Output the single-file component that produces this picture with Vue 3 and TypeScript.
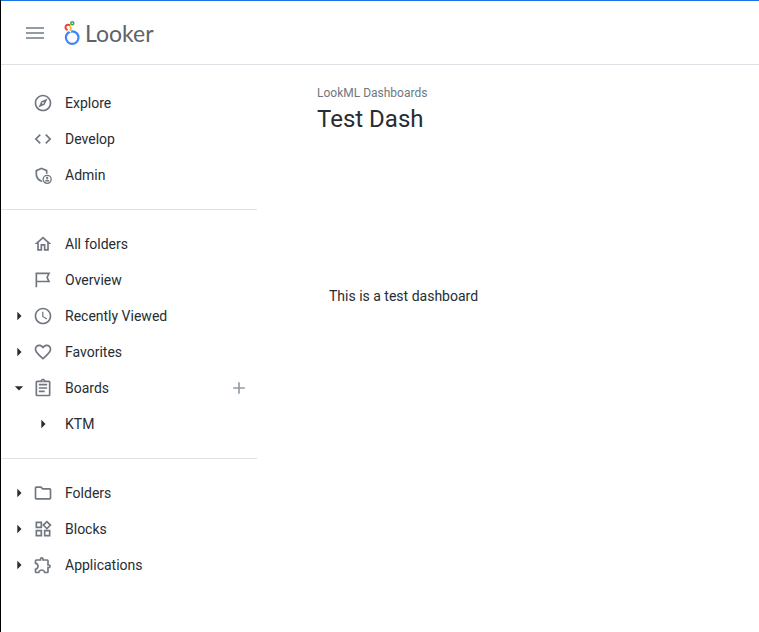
<script setup lang="ts">
import { ref } from 'vue'

interface NavItem {
  label: string
  icon?: string
  caret?: boolean
  open?: boolean
  addable?: boolean
  children?: NavItem[]
}

const icons: Record<string, string> = {
  explore:
    'M12 2C6.48 2 2 6.48 2 12s4.48 10 10 10 10-4.48 10-10S17.52 2 12 2zm0 18c-4.41 0-8-3.59-8-8s3.59-8 8-8 8 3.59 8 8-3.59 8-8 8zm-5.5-2.5l7.51-3.49L17.5 6.5 9.99 9.99 6.5 17.5zm5.5-6.6c.61 0 1.1.49 1.1 1.1s-.49 1.1-1.1 1.1-1.1-.49-1.1-1.1.49-1.1 1.1-1.1z',
  develop:
    'M9.4 16.6L4.8 12l4.6-4.6L8 6l-6 6 6 6 1.4-1.4zm5.2 0l4.6-4.6-4.6-4.6L16 6l6 6-6 6-1.4-1.4z',
  admin:
    'M10.2 3L3 6v5.200c0 4.700 3.100 8.100 7.400 9.300l1-.4a7 7 0 0 1-1-1.800C7.200 17.200 5 14.600 5 11.200V7.400l5.200-2.200 5.200 2.200v3.200a7 7 0 0 1 2 0V6zM17 11.600a5.600 5.600 0 1 0 0 11.200 5.600 5.600 0 0 0 0-11.200zm0 1.600a4 4 0 1 1 0 8 4 4 0 0 1 0-8zm0 1a1.400 1.400 0 1 0 0 2.800 1.400 1.400 0 0 0 0-2.800zm0 3.400c-1.300 0-2.600.5-2.600 1.400v.7h5.200v-.7c0-.9-1.300-1.400-2.600-1.400z',
  home:
    'M12 5.69l5 4.5V18h-2v-6H9v6H7v-7.81l5-4.5M12 3L2 12h3v8h6v-6h2v6h6v-8h3L12 3z',
  flag:
    'M3 3h17.800l-2.800 5.900 2.800 5.900H5v5.900H3V3zm2 2v7.800h12.700L15.800 8.900 17.700 5H5z',
  clock:
    'M12 2C6.500 2 2 6.500 2 12s4.500 10 10 10 10-4.480 10-10S17.520 2 12 2zm0 18c-4.420 0-8-3.580-8-8s3.580-8 8-8 8 3.580 8 8-3.580 8-8 8zm.5-13H11v6l5.250 3.150.75-1.230-4.500-2.670z',
  heart:
    'M16.500 3c-1.740 0-3.410.81-4.500 2.090C10.910 3.810 9.240 3 7.500 3 4.420 3 2 5.420 2 8.500c0 3.780 3.400 6.860 8.550 11.540L12 21.350l1.450-1.320C18.600 15.360 22 12.280 22 8.500 22 5.420 19.580 3 16.500 3zm-4.400 15.550l-.1.1-.1-.1C7.140 14.240 4 11.390 4 8.500 4 6.500 5.500 5 7.500 5c1.540 0 3.040.99 3.570 2.360h1.870C13.460 5.990 14.960 5 16.500 5c2 0 3.500 1.500 3.500 3.500 0 2.890-3.140 5.740-7.900 10.050z',
  board:
    'M7 15h7v2H7zm0-4h10v2H7zm0-4h10v2H7zm12-4h-4.180C14.400 1.840 13.300 1 12 1s-2.400.84-2.820 2H5c-1.100 0-2 .9-2 2v15c0 1.100.9 2 2 2h14c1.100 0 2-.9 2-2V5c0-1.100-.9-2-2-2zm-7-.25c.41 0 .75.34.75.75s-.34.75-.75.75-.75-.34-.75-.75.34-.75.75-.75zM19 20H5V5h14v15z',
  folder:
    'M9.170 6l2 2H20v10H4V6h5.170M10 4H4c-1.100 0-1.990.9-1.990 2L2 18c0 1.100.9 2 2 2h16c1.100 0 2-.9 2-2V8c0-1.100-.9-2-2-2h-8l-2-2z',
  blocks:
    'M16.660 4.520l2.830 2.830-2.830 2.830-2.830-2.830 2.830-2.830M9 5v4H5V5h4m10 10v4h-4v-4h4M9 15v4H5v-4h4m7.660-13.310L11 7.340 16.660 13l5.660-5.660-5.660-5.650zM11 3H3v8h8V3zm10 10h-8v8h8v-8zm-10 0H3v8h8v-8z',
  puzzle:
    'M10.500 4.500c.28 0 .5.22.5.5v2h6v6h2c.28 0 .5.22.5.5s-.22.5-.5.5h-2v6h-2.120c-.68-1.750-2.390-3-4.380-3s-3.700 1.250-4.380 3H4v-2.120c1.750-.68 3-2.390 3-4.380 0-1.990-1.240-3.700-2.990-4.380L4 7h6V5c0-.28.22-.5.5-.5m0-2C9.120 2.500 8 3.620 8 5H4c-1.100 0-1.990.9-1.990 2v3.800h.29c1.490 0 2.700 1.210 2.700 2.700s-1.210 2.700-2.700 2.700H2V20c0 1.100.9 2 2 2h3.800v-.3c0-1.490 1.210-2.700 2.700-2.700s2.700 1.210 2.700 2.700v.3H17c1.100 0 2-.9 2-2v-4c1.380 0 2.500-1.120 2.500-2.500S20.380 11 19 11V7c0-1.100-.9-2-2-2h-4c0-1.380-1.120-2.500-2.500-2.500z',
}

const sections = ref<NavItem[][]>([
  [
    { label: 'Explore', icon: 'explore' },
    { label: 'Develop', icon: 'develop' },
    { label: 'Admin', icon: 'admin' },
  ],
  [
    { label: 'All folders', icon: 'home' },
    { label: 'Overview', icon: 'flag' },
    { label: 'Recently Viewed', icon: 'clock', caret: true },
    { label: 'Favorites', icon: 'heart', caret: true },
    {
      label: 'Boards',
      icon: 'board',
      caret: true,
      open: true,
      addable: true,
      children: [{ label: 'KTM' }],
    },
  ],
  [
    { label: 'Folders', icon: 'folder', caret: true },
    { label: 'Blocks', icon: 'blocks', caret: true },
    { label: 'Applications', icon: 'puzzle', caret: true },
  ],
])
</script>

<template>
  <div class="shell">
    <header class="topbar">
      <button class="menu" type="button" aria-label="Main menu">
        <svg viewBox="0 0 24 24" width="24" height="24"><path d="M3 18h18v-2H3v2zm0-5h18v-2H3v2zm0-7v2h18V6H3z" /></svg>
      </button>
      <a class="brand" href="#" aria-label="Looker home">
        <svg viewBox="0 0 16 27" width="16" height="27" fill="none">
          <circle cx="8.200" cy="18.600" r="6.300" stroke="#4285f4" stroke-width="2.200" />
          <path d="M5 11.200L7 13.200" stroke="#fff" stroke-width="1.400" />
          <path d="M3.600 10.900A2.600 2.600 0 1 1 6 6.600" stroke="#ea4335" stroke-width="2" />
          <path d="M6.200 7.200Q7.400 9 6.300 11.300" stroke="#fbbc04" stroke-width="1.900" />
          <circle cx="8.300" cy="4.200" r="1.500" stroke="#34a853" stroke-width="1.500" />
        </svg>
        <span>Looker</span>
      </a>
    </header>

    <div class="body">
      <nav class="sidebar" aria-label="Main navigation">
        <ul v-for="(items, s) in sections" :key="s" class="section">
          <li v-for="item in items" :key="item.label">
            <div class="row">
              <button
                v-if="item.caret"
                class="icon-button caret"
                type="button"
                :aria-label="`Toggle ${item.label}`"
                :aria-expanded="!!item.open"
                @click="item.open = !item.open"
              >
                <svg class="icon" viewBox="0 0 24 24"><path :d="item.open ? 'M7 10l5 5 5-5H7z' : 'M10 17l5-5-5-5v10z'" /></svg>
              </button>
              <span v-else class="spacer"></span>
              <a class="link" href="#">
                <svg class="icon" viewBox="0 0 24 24" aria-hidden="true"><path fill-rule="evenodd" :d="icons[item.icon ?? '']" /></svg>
                <span>{{ item.label }}</span>
              </a>
              <button v-if="item.addable" class="icon-button add" type="button" aria-label="Create board">
                <svg class="icon" viewBox="0 0 24 24"><path d="M19 13h-6v6h-2v-6H5v-2h6V5h2v6h6v2z" /></svg>
              </button>
            </div>
            <ul v-if="item.open && item.children">
              <li v-for="child in item.children" :key="child.label" class="row nested">
                <button class="icon-button caret" type="button" :aria-label="`Toggle ${child.label}`">
                  <svg class="icon" viewBox="0 0 24 24"><path d="M10 17l5-5-5-5v10z" /></svg>
                </button>
                <a class="link" href="#">{{ child.label }}</a>
              </li>
            </ul>
          </li>
        </ul>
      </nav>

      <main class="content">
        <a class="crumb" href="#">LookML Dashboards</a>
        <h1>Test Dash</h1>
        <p class="tile">This is a test dashboard</p>
      </main>
    </div>
  </div>
</template>

<style>
body {
  margin: 0;
  background: #fff;
}
</style>

<style scoped>
.shell {
  box-sizing: border-box;
  min-height: 100vh;
  border-left: 1px solid #000;
  font-family: Roboto, "Liberation Sans", sans-serif;
  font-size: 14px;
  line-height: 20px;
  color: #262d33;
}

.topbar {
  display: flex;
  align-items: center;
  gap: 17px;
  height: 63px;
  padding: 0 22px;
  border-top: 1px solid #1a73e8;
  border-bottom: 1px solid #dee1e5;
}

button {
  display: flex;
  padding: 0;
  border: 0;
  background: none;
  cursor: pointer;
}

a {
  color: inherit;
  text-decoration: none;
}

svg {
  display: block;
  flex: none;
}

.menu {
  fill: #939ba5;
}

.brand {
  display: flex;
  align-items: center;
  gap: 5px;
  font-family: Lato, sans-serif;
  font-size: 23px;
  line-height: 30px;
  color: #5f6368;
}

.body {
  display: flex;
}

.sidebar {
  flex: 0 0 256px;
  padding-top: 4px;
}

ul {
  margin: 0;
  padding: 0;
  list-style: none;
}

.section {
  padding: 16px 0;
}

.section + .section {
  border-top: 1px solid #dee1e5;
}

.row {
  display: flex;
  align-items: center;
  gap: 4px;
  height: 36px;
  padding: 0 8px;
}

.nested {
  gap: 12px;
  padding-left: 32px;
}

.link {
  display: flex;
  flex: 1;
  align-items: center;
  gap: 12px;
}

.icon {
  width: 20px;
  height: 20px;
  fill: #707781;
}

.spacer {
  width: 20px;
}

.caret .icon {
  fill: #262d33;
}

.add .icon {
  fill: #939ba5;
}

.content {
  flex: 1;
  min-width: 0;
  padding: 20px 60px;
}

.crumb {
  display: block;
  font-size: 12px;
  line-height: 16px;
  color: #707781;
}

h1 {
  margin: 0;
  padding: 2px 0;
  font-size: 24px;
  font-weight: 400;
  line-height: 32px;
}

.tile {
  margin: 0;
  padding: 149px 12px;
}
</style>
